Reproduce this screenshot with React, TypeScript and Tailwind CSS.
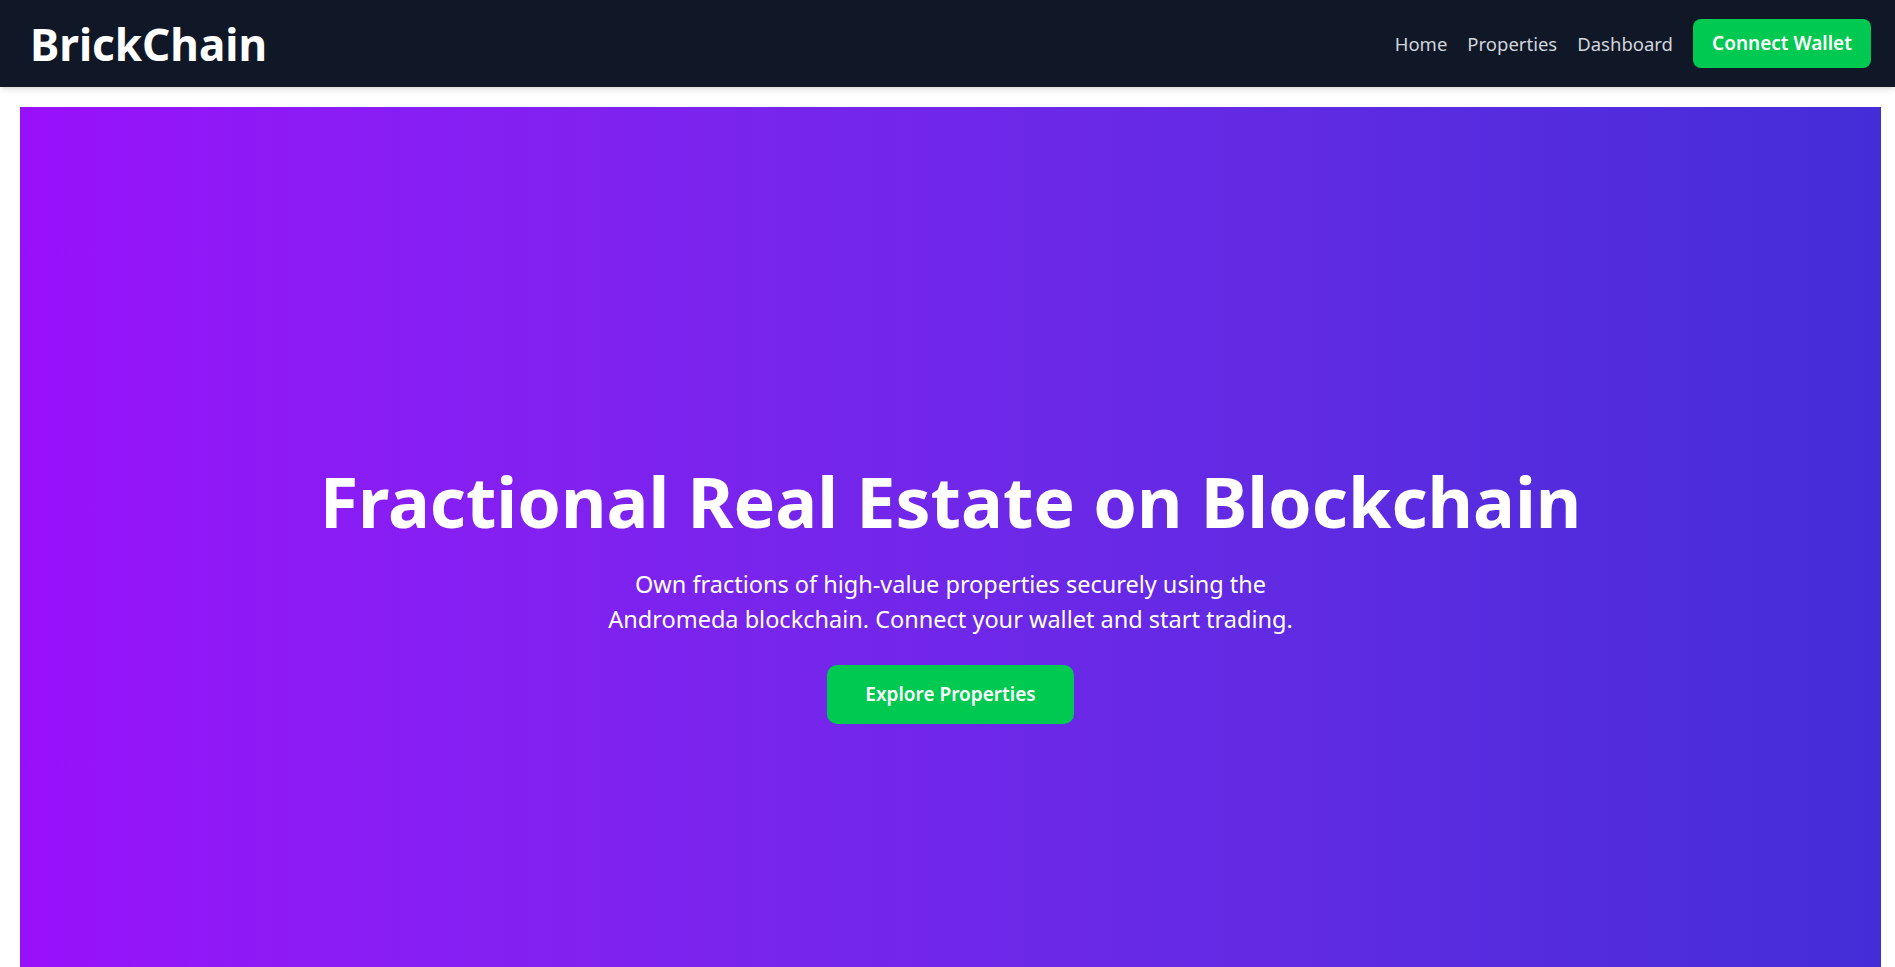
import React from "react";

const links = ["Home", "Properties", "Dashboard"];

function Navbar() {
  return (
    <header className="h-[87px] bg-gray-900 flex items-center justify-between pl-[30px] pr-6 shadow-md relative z-10">
      <a href="#" className="text-white font-bold text-[44px] leading-none">
        BrickChain
      </a>
      <nav className="flex items-center gap-5">
        {links.map((l) => (
          <a key={l} href="#" className="text-gray-300 text-[18.5px] hover:text-white">
            {l}
          </a>
        ))}
        <button className="w-[178px] h-[49px] rounded-lg bg-green-500 text-white font-semibold text-[19px] hover:bg-green-600">
          Connect Wallet
        </button>
      </nav>
    </header>
  );
}

function Hero() {
  return (
    <section className="mt-5 ml-5 mr-[14px] h-[969px] bg-gradient-to-r from-purple-600 to-indigo-700 flex flex-col items-center justify-center text-center text-white">
      <h1 className="font-bold text-[70px] leading-[84px] mb-[24px]">
        Fractional Real Estate on Blockchain
      </h1>
      <p className="text-[23.5px] leading-[35px] max-w-[720px]">
        Own fractions of high-value properties securely using the
        <br />
        Andromeda blockchain. Connect your wallet and start trading.
      </p>
      <button className="mt-[28px] w-[247px] h-[59px] rounded-[10px] bg-green-500 text-white font-semibold text-[19px] hover:bg-green-600">
        Explore Properties
      </button>
    </section>
  );
}

export default function App() {
  return (
    <div className="min-h-screen bg-white font-['Noto_Sans',sans-serif]">
      <Navbar />
      <Hero />
    </div>
  );
}
